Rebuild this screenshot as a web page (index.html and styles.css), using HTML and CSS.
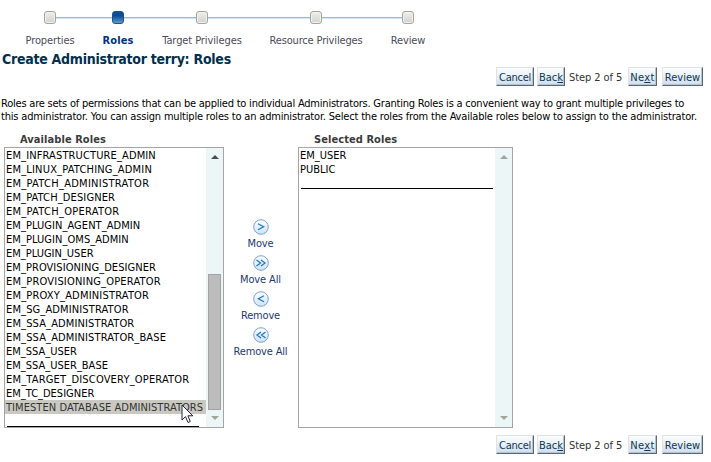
FILE: index.html
```html
<!DOCTYPE html>
<html lang="en">
<head>
<meta charset="utf-8">
<title>Create Administrator terry: Roles</title>
<link rel="stylesheet" href="styles.css">
</head>
<body>
<svg class="defs" width="0" height="0" aria-hidden="true">
  <defs>
    <linearGradient id="ball" x1="0" y1="0" x2="0" y2="1"><stop offset="0" stop-color="#fff"/><stop offset="1" stop-color="#cfe2f4"/></linearGradient>
  </defs>
</svg>
<nav class="train">
  <div class="stop"><i class="dot"></i><span>Properties</span></div>
  <div class="stop current"><i class="dot"></i><span>Roles</span></div>
  <div class="stop"><i class="dot"></i><span>Target Privileges</span></div>
  <div class="stop"><i class="dot"></i><span>Resource Privileges</span></div>
  <div class="stop"><i class="dot"></i><span>Review</span></div>
</nav>
<h1>Create Administrator terry: Roles</h1>
<div class="buttons">
  <button class="cancel">Cancel</button><button class="back">Bac<u>k</u></button><span class="step">Step 2 of 5</span><button class="next">Ne<u>x</u>t</button><button class="review">Review</button>
</div>
<p class="intro"><span class="line1">Roles are sets of permissions that can be applied to individual Administrators. Granting Roles is a convenient way to grant multiple privileges to</span><br><span class="line2">this administrator. You can assign multiple roles to an administrator. Select the roles from the Available roles below to assign to the administrator.</span></p>
<main class="shuttle">
  <section class="available">
    <h2>Available Roles</h2>
    <div class="list">
      <ul>
        <li class="t2">EM_INFRASTRUCTURE_ADMIN</li>
        <li class="t3">EM_LINUX_PATCHING_ADMIN</li>
        <li class="t4">EM_PATCH_ADMINISTRATOR</li>
        <li class="t2">EM_PATCH_DESIGNER</li>
        <li class="t4">EM_PATCH_OPERATOR</li>
        <li class="t1">EM_PLUGIN_AGENT_ADMIN</li>
        <li class="t1">EM_PLUGIN_OMS_ADMIN</li>
        <li>EM_PLUGIN_USER</li>
        <li class="t1">EM_PROVISIONING_DESIGNER</li>
        <li class="t3">EM_PROVISIONING_OPERATOR</li>
        <li class="t3">EM_PROXY_ADMINISTRATOR</li>
        <li class="t2">EM_SG_ADMINISTRATOR</li>
        <li class="t2">EM_SSA_ADMINISTRATOR</li>
        <li class="t2">EM_SSA_ADMINISTRATOR_BASE</li>
        <li>EM_SSA_USER</li>
        <li>EM_SSA_USER_BASE</li>
        <li class="t3">EM_TARGET_DISCOVERY_OPERATOR</li>
        <li>EM_TC_DESIGNER</li>
        <li class="t1 picked">TIMESTEN DATABASE ADMINISTRATORS</li>
        <li class="rule"></li>
      </ul>
      <div class="track live"><i class="up"></i><b class="thumb"></b><i class="down"></i></div>
      <svg class="pointer" width="13" height="20" viewBox="0 0 13 20"><path d="M1 1V16L4.5 12.7L7 18.5L9.3 17.5L6.9 11.8H11.8Z" fill="#fff" stroke="#24243c" stroke-width="1"/></svg>
    </div>
  </section>
  <div class="moves">
    <a><svg width="16" height="16" viewBox="0 0 16 16"><circle cx="8" cy="8" r="7.3"/><path d="M5 4.8L10.6 7.8L5 10.8"/></svg><span>Move</span></a>
    <a><svg width="16" height="16" viewBox="0 0 16 16"><circle cx="8" cy="8" r="7.3"/><path d="M3.5 5L7.5 8L3.5 11M8 5L12 8L8 11"/></svg><span>Move All</span></a>
    <a><svg width="16" height="16" viewBox="0 0 16 16"><circle cx="8" cy="8" r="7.3"/><path d="M11 4.8L5.4 7.8L11 10.8"/></svg><span class="tight">Remove</span></a>
    <a><svg width="16" height="16" viewBox="0 0 16 16"><circle cx="8" cy="8" r="7.3"/><path d="M8 5L4 8L8 11M12.5 5L8.5 8L12.5 11"/></svg><span class="tight">Remove All</span></a>
  </div>
  <section class="selected">
    <h2>Selected Roles</h2>
    <div class="list">
      <ul>
        <li>EM_USER</li>
        <li>PUBLIC</li>
        <li class="rule"></li>
      </ul>
      <div class="track"><i class="up"></i><i class="down"></i></div>
    </div>
  </section>
</main>
<div class="buttons">
  <button class="cancel">Cancel</button><button class="back">Bac<u>k</u></button><span class="step">Step 2 of 5</span><button class="next">Ne<u>x</u>t</button><button class="review">Review</button>
</div>
</body>
</html>
```
FILE: styles.css
```css
* { box-sizing: border-box; }
body {
  margin: 0;
  width: 711px;
  height: 462px;
  overflow: hidden;
  background: #fff;
  color: #000;
  font: 11px/13px "DejaVu Sans Condensed", "DejaVu Sans", sans-serif;
}
.defs { display: block; height: 0; }
h1, h2, p, ul { margin: 0; padding: 0; }

.train {
  display: grid;
  grid-template-columns: 68px 68px 100px 128px 56px;
  width: 420px;
  height: 50px;
  margin-left: 16px;
  padding-top: 11px;
  color: #4b4b5b;
  background: linear-gradient(#9fb9d4 50%, #d5e4f0 50%) 34px 17px / 352px 2px no-repeat;
}
.stop { display: flex; flex-direction: column; align-items: center; white-space: nowrap; letter-spacing: -0.1px; }
.stop:nth-child(2) { letter-spacing: .1px; }
.stop:nth-child(4) { letter-spacing: -0.16px; }
.dot {
  width: 12px;
  height: 13px;
  margin-bottom: 10px;
  border: 1px solid #a3a3a0;
  border-radius: 3px;
  background: linear-gradient(#eeeeec, #d2d2d0);
  box-shadow: inset 0 0 0 1px #f1f1ef;
}
.current { color: #003286; font-weight: bold; }
.current .dot { border-color: #1d528a; background: linear-gradient(#0c4d94 35%, #5a9bcf); box-shadow: none; }

h1 {
  height: 17px;
  padding: 1px 0 0 2px;
  font-size: 14px;
  line-height: 17px;
  letter-spacing: -.27px;
  color: #00304f;
}

.buttons { display: flex; height: 19px; padding-left: 496px; white-space: nowrap; }
.buttons button {
  height: 19px;
  padding: 2px 0 0;
  border: 1px solid #dfe3e6;
  border-right: 1px solid #5a6874;
  border-bottom: 1px solid #5a6874;
  box-shadow: inset -1px -1px #b6c3d0;
  background: linear-gradient(#fbfcfd, #eaf3f6 45%, #ccdcf0);
  color: #123654;
  font: inherit;
  line-height: 15px;
  text-align: center;
}
.buttons .cancel { width: 38px; margin-right: 3px; letter-spacing: -0.25px; }
.buttons .back { width: 28px; margin-right: 4px; }
.buttons .next { width: 29px; margin-right: 5px; letter-spacing: .4px; }
.buttons .review { width: 41px; }
.step { width: 59px; padding-top: 1px; line-height: 19px; letter-spacing: -0.08px; color: #333; }

.intro { margin-top: 11px; height: 35px; padding-left: 1px; white-space: nowrap; }
.line1 { letter-spacing: -0.215px; }
.line2 { letter-spacing: -0.18px; }

.shuttle { display: flex; padding-left: 4px; height: 303px; }
.available { width: 220px; }
.selected { width: 215px; }
h2 { height: 15px; padding-left: 16px; font-size: 11px; line-height: 15px; letter-spacing: .07px; color: #3b3b3b; }
.list { position: relative; display: flex; height: 281px; border: 1px solid #a5a5a5; overflow: hidden; }
ul { flex: 1; list-style: none; }
li { height: 14px; padding: 1px 0 0 1px; line-height: 14px; white-space: nowrap; }
.t1 { letter-spacing: .06px; }
.t2 { letter-spacing: .13px; }
.t3 { letter-spacing: .19px; }
.t4 { letter-spacing: .28px; }
.picked { background: #c9c9c1; color: #333; }
.rule::before { content: ""; display: block; width: 192px; height: 11px; margin-left: 1px; border-bottom: 1px solid #000; }

.track { width: 17px; display: flex; flex-direction: column; align-items: center; padding: 7px 0 7px; background: #edf6f6; }
.up, .down { border: 4px solid transparent; border-top-width: 0; border-bottom: 4px solid #a3a39b; }
.down { margin-top: auto; border-top: 4px solid #a3a39b; border-bottom-width: 0; }
.live .up { border-bottom-color: #4c4c4c; }
.thumb { width: 13px; height: 136px; margin-top: 115px; border: 1px solid #a3a3a3; background: #bcbcbc; flex-shrink: 0; }
.pointer { position: absolute; left: 176px; top: 256px; }

.moves { width: 74px; padding: 87px 1px 0 0; display: flex; flex-direction: column; align-items: center; color: #1c3a75; }
.moves a { height: 36px; display: flex; flex-direction: column; align-items: center; white-space: nowrap; letter-spacing: -0.12px; }
.moves svg { display: block; margin: 0 0 2px 1px; }
.moves .tight { letter-spacing: -0.17px; }
.moves circle { fill: url(#ball); stroke: #7ca3d4; stroke-width: 1; }
.moves path { fill: none; stroke: #1f78c8; stroke-width: 1.3; }
```
